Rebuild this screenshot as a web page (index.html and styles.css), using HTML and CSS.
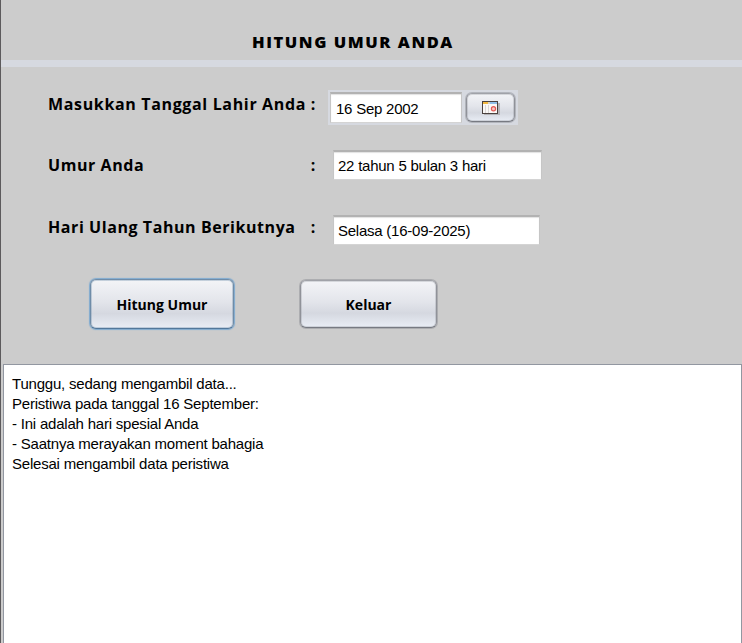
FILE: index.html
```html
<!DOCTYPE html>
<html lang="id">
<head>
<meta charset="utf-8">
<title>Hitung Umur Anda</title>
<link rel="stylesheet" href="styles.css">
</head>
<body>
<main class="window">
  <header class="header"><h1 class="title">HITUNG UMUR ANDA</h1></header>
  <section class="form">
    <div class="row row-date">
      <div class="label"><span>Masukkan Tanggal Lahir Anda</span><span class="colon">:</span></div>
      <div class="picker">
        <div class="field date">16 Sep 2002</div>
        <button class="btn cal" aria-label="Kalender">
          <svg width="18" height="14" viewBox="0 0 18 14" shape-rendering="crispEdges">
            <path fill="#b4b3b7" d="M2 2h16v12H2z"/>
            <path fill="#4a413e" d="M0 0h16v13H0z"/>
            <path fill="#faf8f6" d="M1 1h14v11H1z"/>
            <path fill="#f2b840" d="M1 1h5v2H1z"/>
            <path fill="#d8d2c8" d="M6 1h2v2H6z"/>
            <path fill="#8fbde8" d="M8 1h7v2H8z"/>
            <path fill="#dad6d6" d="M3 4h1v8H3zM6 4h1v8H6z"/>
            <circle cx="11.5" cy="7.7" r="2.1" fill="#f6c6c2" stroke="#e35a55" stroke-width="1.2" shape-rendering="auto"/>
          </svg>
        </button>
      </div>
    </div>
    <div class="row row-age">
      <div class="label"><span>Umur Anda</span><span class="colon">:</span></div>
      <div class="field age">22 tahun 5 bulan 3 hari</div>
    </div>
    <div class="row row-next">
      <div class="label"><span>Hari Ulang Tahun Berikutnya</span><span class="colon">:</span></div>
      <div class="field next">Selasa (16-09-2025)</div>
    </div>
    <div class="actions">
      <button class="btn big focused">Hitung Umur</button>
      <button class="btn big exit">Keluar</button>
    </div>
  </section>
  <section class="output">
    <p>Tunggu, sedang mengambil data...</p>
    <p>Peristiwa pada tanggal 16 September:</p>
    <p>- Ini adalah hari spesial Anda</p>
    <p>- Saatnya merayakan moment bahagia</p>
    <p>Selesai mengambil data peristiwa</p>
  </section>
</main>
</body>
</html>
```
FILE: styles.css
```css
* { box-sizing: border-box; }
body { margin: 0; overflow: hidden; background: #ccc; color: #000; }
.window {
  width: 742px; height: 643px;
  display: flex; flex-direction: column;
  border-left: 1px solid #5c5a5c;
  background: #ccc;
}
.header { height: 67px; flex: none; border-bottom: 7px solid #d6d9e0; padding: 30px 0 0 251px; }
.title {
  margin: 0; white-space: nowrap;
  font: 800 16.5px/24px "Open Sans", sans-serif;
  letter-spacing: 1.55px;
}
.form { flex: none; height: 297px; padding: 23px 0 0 47px; }
.row { display: flex; align-items: flex-start; }
.row-date { height: 60px; }
.row-age { height: 65px; }
.row-next { height: 63px; }
.label {
  width: 280px; flex: none; padding-right: 12px;
  display: flex; justify-content: space-between;
  font: 700 16px/22px "Open Sans", sans-serif;
  letter-spacing: 0.57px; white-space: nowrap;
}
.row-date .label { padding-top: 3px; letter-spacing: 0.65px; }
.row-age .label { padding-top: 4px; }
.row-next .label { padding-top: 1px; }
.field {
  height: 30px; white-space: nowrap;
  font: 15px/27px "Liberation Sans", Arial, sans-serif;
  letter-spacing: -0.24px;
  background: #fff;
  border: 1px solid #c6c6c6;
  border-top: 2px solid #b2b2b2;
  border-bottom-color: #d4d4d4;
  box-shadow: inset 0 1px 1px #e2e2e2;
}
.picker {
  display: flex; gap: 4px; width: 190px; height: 35px;
  padding: 2px 0 0 2px; background: #d6d9e0;
}
.date { width: 132px; height: 31px; padding-left: 5px; line-height: 30px; }
.age { width: 209px; margin-left: 5px; padding-left: 4px; }
.next { width: 207px; margin-left: 5px; padding-left: 4px; }
.btn {
  margin: 0; padding: 0; color: #000;
  border: 1px solid #909299; border-bottom-color: #777a82;
  border-top-color: #a0a2a8; border-radius: 6px;
  background: linear-gradient(#f3f4f7 0%, #e3e5eb 45%, #d5d8e0 70%, #e9edf5 100%);
  box-shadow: 0 0 0 1px rgba(125, 128, 136, .4), inset 0 0 0 1px rgba(125, 128, 136, .25);
}
.cal { width: 49px; height: 29px; margin-top: 1px; display: flex; align-items: center; justify-content: center; }
.actions { display: flex; padding-left: 42px; }
.big { height: 48px; font: 700 14px/20px "Open Sans", sans-serif; }
.focused {
  width: 144px; height: 50px; margin-top: 1px; padding-top: 1px;
  border-color: #6f8ca8; border-bottom-color: #52779a;
  box-shadow: 0 0 1px 1px #7faad0, inset 0 0 0 1px rgba(110, 140, 170, .35);
}
.exit { width: 137px; margin: 2px 0 0 66px; padding-top: 1px; }
.output {
  flex: 1; margin-left: 2px; padding: 9px 8px;
  background: #fff; border: 1px solid #9297a1; border-bottom: 0;
  font: 15px/20px "Liberation Sans", Arial, sans-serif;
  letter-spacing: -0.21px;
}
.output p { margin: 0; }
```
